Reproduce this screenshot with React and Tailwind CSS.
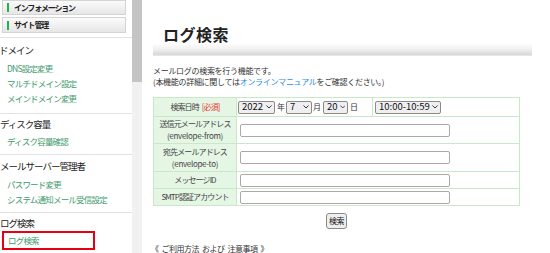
const jp = { fontFamily: '"Noto Sans CJK JP", "Noto Sans", sans-serif' };

function SideButton({ label, className }) {
  return (
    <div
      className={`ml-[2px] w-[124px] flex items-center border border-[#d4d4d4] bg-gradient-to-b from-[#fbfbfb] to-[#e6e6e6] ${className}`}
    >
      <span className="ml-[4px] w-[2px] h-[9px] bg-[#22b14c]" />
      <span className="ml-[5px] text-[8px] font-bold tracking-[-1.2px] text-[#222] leading-none">
        {label}
      </span>
    </div>
  );
}

function Sel({ value, w, className = "" }) {
  return (
    <span
      className={`${w} ${className} shrink-0 h-[13px] flex items-center justify-between pl-[3px] pr-[2px] border border-[#8a8a8a] rounded-[2px] bg-[#efeff2] text-[9.5px] leading-none text-[#111]`}
    >
      {value}
      <svg width="6" height="4" viewBox="0 0 6 4" className="ml-[2px]">
        <path d="M0.5 0.5 L3 3 L5.5 0.5" fill="none" stroke="#222" strokeWidth="0.9" />
      </svg>
    </span>
  );
}

function TextBox() {
  return <div className="ml-[3px] w-[210px] h-[13px] border border-[#a9a9a9] rounded-[2px] bg-white" />;
}

export default function App() {
  const sideHead = "text-[9.5px] tracking-[-1px] text-[#222] leading-none flex items-center h-[14px] -ml-[1px]";
  const sideLink = "text-[8.5px] tracking-[-0.8px] text-[#3f9b6e] leading-none flex items-center h-[15px] pl-[7px]";
  const sep = "border-t border-[#e2e2e2] w-[132px]";
  const label = "bg-[#e5f6e5] border border-[#c8e8c8] w-[83px] text-center text-[8px] tracking-[-0.9px] text-[#444] leading-[12px] p-0";
  const cell = "border border-[#c8e8c8] p-0";
  const unit = "shrink-0 w-[8px] text-[8px] text-[#333] leading-none";

  return (
    <div className="w-[550px] h-[253px] overflow-hidden flex bg-white" style={jp}>
      {/* sidebar */}
      <div className="w-[132px] shrink-0 flex flex-col">
        <SideButton label="インフォメーション" className="h-[15px]" />
        <SideButton label="サイト管理" className="h-[16px] mt-[2px]" />
        <div className={`${sep} mt-[4px]`} />

        <div className={`${sideHead} mt-[6px]`}>ドメイン</div>
        <div className={`${sideLink} mt-[3px]`}>DNS設定変更</div>
        <div className={sideLink}>マルチドメイン設定</div>
        <div className={sideLink}>メインドメイン変更</div>
        <div className={`${sep} mt-[7px]`} />

        <div className={`${sideHead} mt-[4px] pl-[1px]`}>ディスク容量</div>
        <div className={`${sideLink} mt-[2px]`}>ディスク容量確認</div>
        <div className={`${sep} mt-[5px]`} />

        <div className={`${sideHead} mt-[5px] pl-[1px]`}>メールサーバー管理者</div>
        <div className={`${sideLink} mt-[3px]`}>パスワード変更</div>
        <div className={sideLink}>システム通知メール受信設定</div>
        <div className={`${sep} mt-[5px]`} />

        <div className={`${sideHead} mt-[4px] pl-[1px]`}>ログ検索</div>
        <div className="ml-[2px] mt-0 w-[93px] h-[19px] border-2 border-[#e60012] flex items-center pl-[4px] text-[8.5px] tracking-[-0.8px] text-[#3f9b6e] leading-none">
          ログ検索
        </div>
      </div>

      {/* scrollbar */}
      <div className="w-[10px] shrink-0 bg-[#f1f1f1] flex flex-col">
        <div className="h-[82px] bg-[#c4c4c4]" />
      </div>

      {/* main */}
      <div className="flex-1 pl-[11px] pt-[26px]">
        <div className="pl-[10px] h-[17px] text-[16px] font-bold leading-none text-[#222] tracking-[0.5px]">
          ログ検索
        </div>
        <div className="w-[379px] h-[13px] bg-gradient-to-b from-white via-[#f1f1f1] to-[#d6d6d6] border-b border-[#e6e6e6]" />

        <div className="mt-[9px] text-[8px] leading-[11px] tracking-[-0.3px] text-[#333]">
          <div>メールログの検索を行う機能です。</div>
          <div>
            (本機能の詳細に関しては<span className="text-[#2b8ce6]">オンラインマニュアル</span>をご確認ください。)
          </div>
        </div>

        <table className="mt-[10px] w-[367px] border-collapse">
          <tbody>
            <tr className="h-[19px]">
              <td className={label}>
                検索日時<span className="ml-[3px] text-[#e53935]">[必須]</span>
              </td>
              <td className={cell}>
                <div className="flex items-center h-[18px]">
                  <div className="w-[136px] shrink-0 h-full flex items-center border-r border-[#c8e8c8]">
                    <Sel value="2022" w="w-[37px]" className="ml-[1px]" />
                    <span className={`${unit} ml-[2px]`}>年</span>
                    <Sel value="7" w="w-[26px]" className="ml-[1px]" />
                    <span className={`${unit} ml-[1px]`}>月</span>
                    <Sel value="20" w="w-[25px]" className="ml-[2px]" />
                    <span className={`${unit} ml-[2px]`}>日</span>
                  </div>
                  <Sel value="10:00-10:59" w="w-[66px]" className="ml-[2px]" />
                </div>
              </td>
            </tr>
            <tr className="h-[27px]">
              <td className={label}>
                送信元メールアドレス
                <br />
                <span className="tracking-[-0.3px]">(envelope-from)</span>
              </td>
              <td className={cell}><TextBox /></td>
            </tr>
            <tr className="h-[28px]">
              <td className={label}>
                宛先メールアドレス
                <br />
                <span className="tracking-[-0.3px]">(envelope-to)</span>
              </td>
              <td className={cell}><TextBox /></td>
            </tr>
            <tr className="h-[17px]">
              <td className={label}>メッセージID</td>
              <td className={cell}><TextBox /></td>
            </tr>
            <tr className="h-[17px]">
              <td className={label}>SMTP認証アカウント</td>
              <td className={cell}><TextBox /></td>
            </tr>
          </tbody>
        </table>

        <div className="w-[367px] flex justify-center mt-[7px]">
          <div className="w-[21px] h-[16px] border border-[#8a8a8a] rounded-[3px] bg-[#efefef] flex items-center justify-center text-[8px] tracking-[-0.5px] text-[#111] leading-none">
            検索
          </div>
        </div>

        <div className="mt-[15px] -ml-[2px] flex gap-[3px] text-[8px] tracking-[-0.5px] text-[#333] leading-[10px]">
          <span>《</span>
          <span>ご利用方法</span>
          <span>および</span>
          <span>注意事項</span>
          <span>》</span>
        </div>
      </div>
    </div>
  );
}
